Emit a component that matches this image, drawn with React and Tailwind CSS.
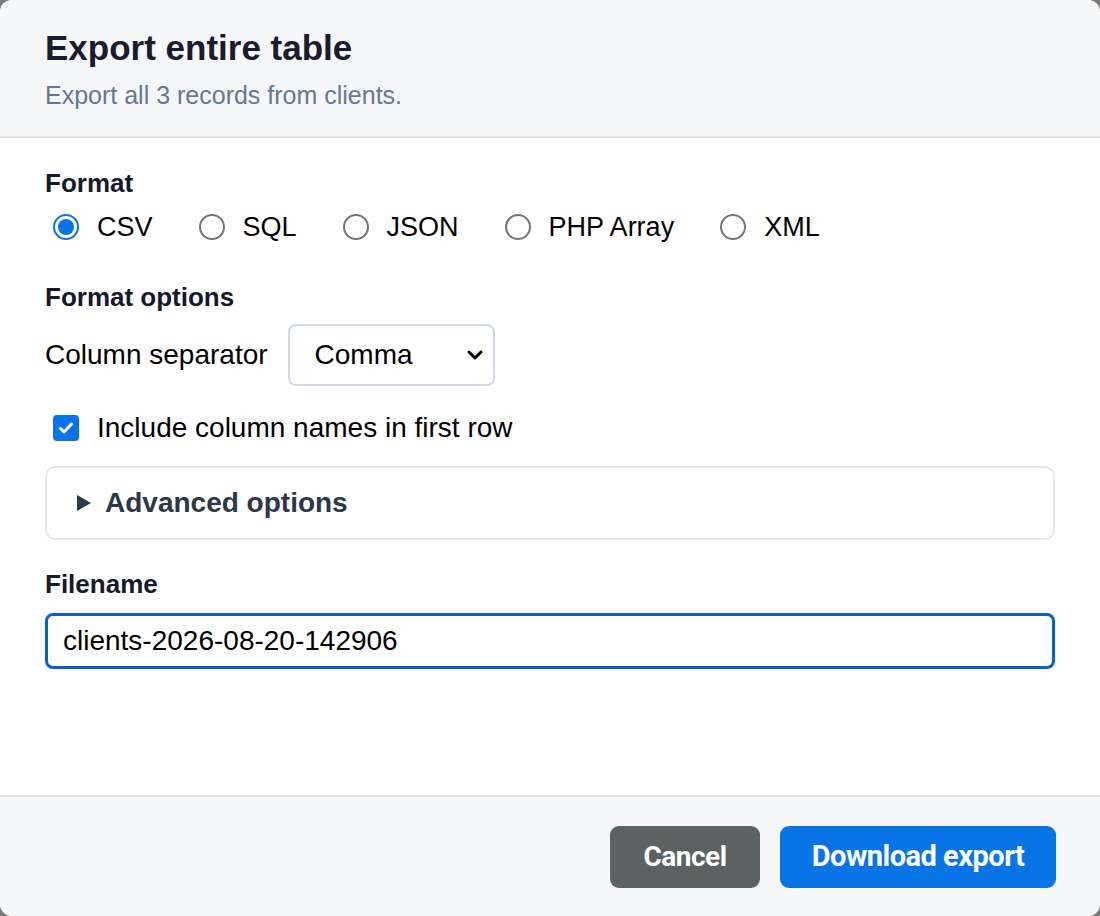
import { useState } from "react"

const formats = ["CSV", "SQL", "JSON", "PHP Array", "XML"]

function Radio({ checked }) {
    return checked ? (
        <span className="w-[26px] h-[26px] rounded-full border-2 border-[#0a73e8] flex items-center justify-center bg-white">
            <span className="w-[16px] h-[16px] rounded-full bg-[#0a73e8]" />
        </span>
    ) : (
        <span className="w-[26px] h-[26px] rounded-full border-2 border-[#767676] bg-white" />
    )
}

export default function App() {
    const [format, setFormat] = useState("CSV")

    return (
        <div className="w-[1100px] h-[916px] bg-[#7a7a7a]" style={{ fontFamily: '"Liberation Sans", Arial, sans-serif' }}>
            <div className="w-full h-full bg-white rounded-[12px] overflow-hidden flex flex-col">

                <div className="h-[138px] shrink-0 bg-[#f6f7f9] border-b-2 border-[#e3e4e2] px-[45px] pt-[28px]">
                    <p className="text-[35px] font-bold text-[#1b1b2f] leading-[40px]">Export entire table</p>
                    <p className="text-[25px] text-[#667892] mt-[12px] leading-[30px]">Export all 3 records from clients.</p>
                </div>

                <div className="flex-1 px-[45px] pt-[30px]">
                    <p className="text-[26px] font-bold text-[#15192a] leading-[30px]">Format</p>
                    <div className="flex items-center gap-[46px] mt-[12px] pl-[8px] h-[34px]">
                        {formats.map((f) => (
                            <label key={f} className="flex items-center gap-[18px] cursor-pointer" onClick={() => setFormat(f)}>
                                <Radio checked={format === f} />
                                <span className="text-[27px] text-black leading-[34px]">{f}</span>
                            </label>
                        ))}
                    </div>

                    <p className="text-[26px] font-bold text-[#15192a] leading-[30px] mt-[38px]">Format options</p>
                    <div className="flex items-center gap-[20px] mt-[12px]">
                        <span className="text-[28px] text-black">Column separator</span>
                        <div className="w-[207px] h-[62px] border-2 border-[#d0d8e4] rounded-[8px] flex items-center justify-between pl-[25px] pr-[8px]">
                            <span className="text-[28px] text-black">Comma</span>
                            <svg width="20" height="20" viewBox="0 0 20 20" fill="none" stroke="black" strokeWidth="3" strokeLinecap="round" strokeLinejoin="round"><path d="M4 7l6 6 6-6" /></svg>
                        </div>
                    </div>

                    <div className="flex items-center gap-[18px] mt-[25px] pl-[8px] h-[34px]">
                        <span className="w-[26px] h-[26px] rounded-[4px] bg-[#0a73e8] flex items-center justify-center">
                            <svg width="18" height="18" viewBox="0 0 18 18" fill="none" stroke="white" strokeWidth="3" strokeLinecap="round" strokeLinejoin="round"><path d="M3.5 9.5l3.5 3.5 7.5-8" /></svg>
                        </span>
                        <span className="text-[28px] text-black leading-[34px]">Include column names in first row</span>
                    </div>

                    <div className="mt-[21px] h-[74px] border-2 border-[#e3e7ec] rounded-[10px] flex items-center pl-[30px] gap-[14px]">
                        <span className="w-0 h-0 border-y-[8px] border-y-transparent border-l-[14px] border-l-[#2c3748]" />
                        <span className="text-[28px] font-bold text-[#2c3748]">Advanced options</span>
                    </div>

                    <p className="text-[26px] font-bold text-[#15192a] leading-[30px] mt-[29px]">Filename</p>
                    <div className="mt-[14px] h-[56px] border-[3px] border-[#0a5fd0] rounded-[8px] flex items-center px-[15px]">
                        <span className="text-[28px] text-black">clients-2026-08-20-142906</span>
                    </div>
                </div>

                <div className="h-[121px] shrink-0 bg-[#f6f7f9] border-t-2 border-[#e3e4e2] flex items-center justify-end gap-[20px] pr-[44px]" style={{ fontFamily: 'Roboto, "Liberation Sans", sans-serif' }}>
                    <button className="w-[150px] h-[62px] rounded-[9px] bg-[#5b6262] text-white text-[28px] font-bold tracking-[-0.5px]">Cancel</button>
                    <button className="w-[276px] h-[62px] rounded-[9px] bg-[#0874e6] text-white text-[29px] font-bold tracking-[-0.5px]">Download export</button>
                </div>
            </div>
        </div>
    )
}
